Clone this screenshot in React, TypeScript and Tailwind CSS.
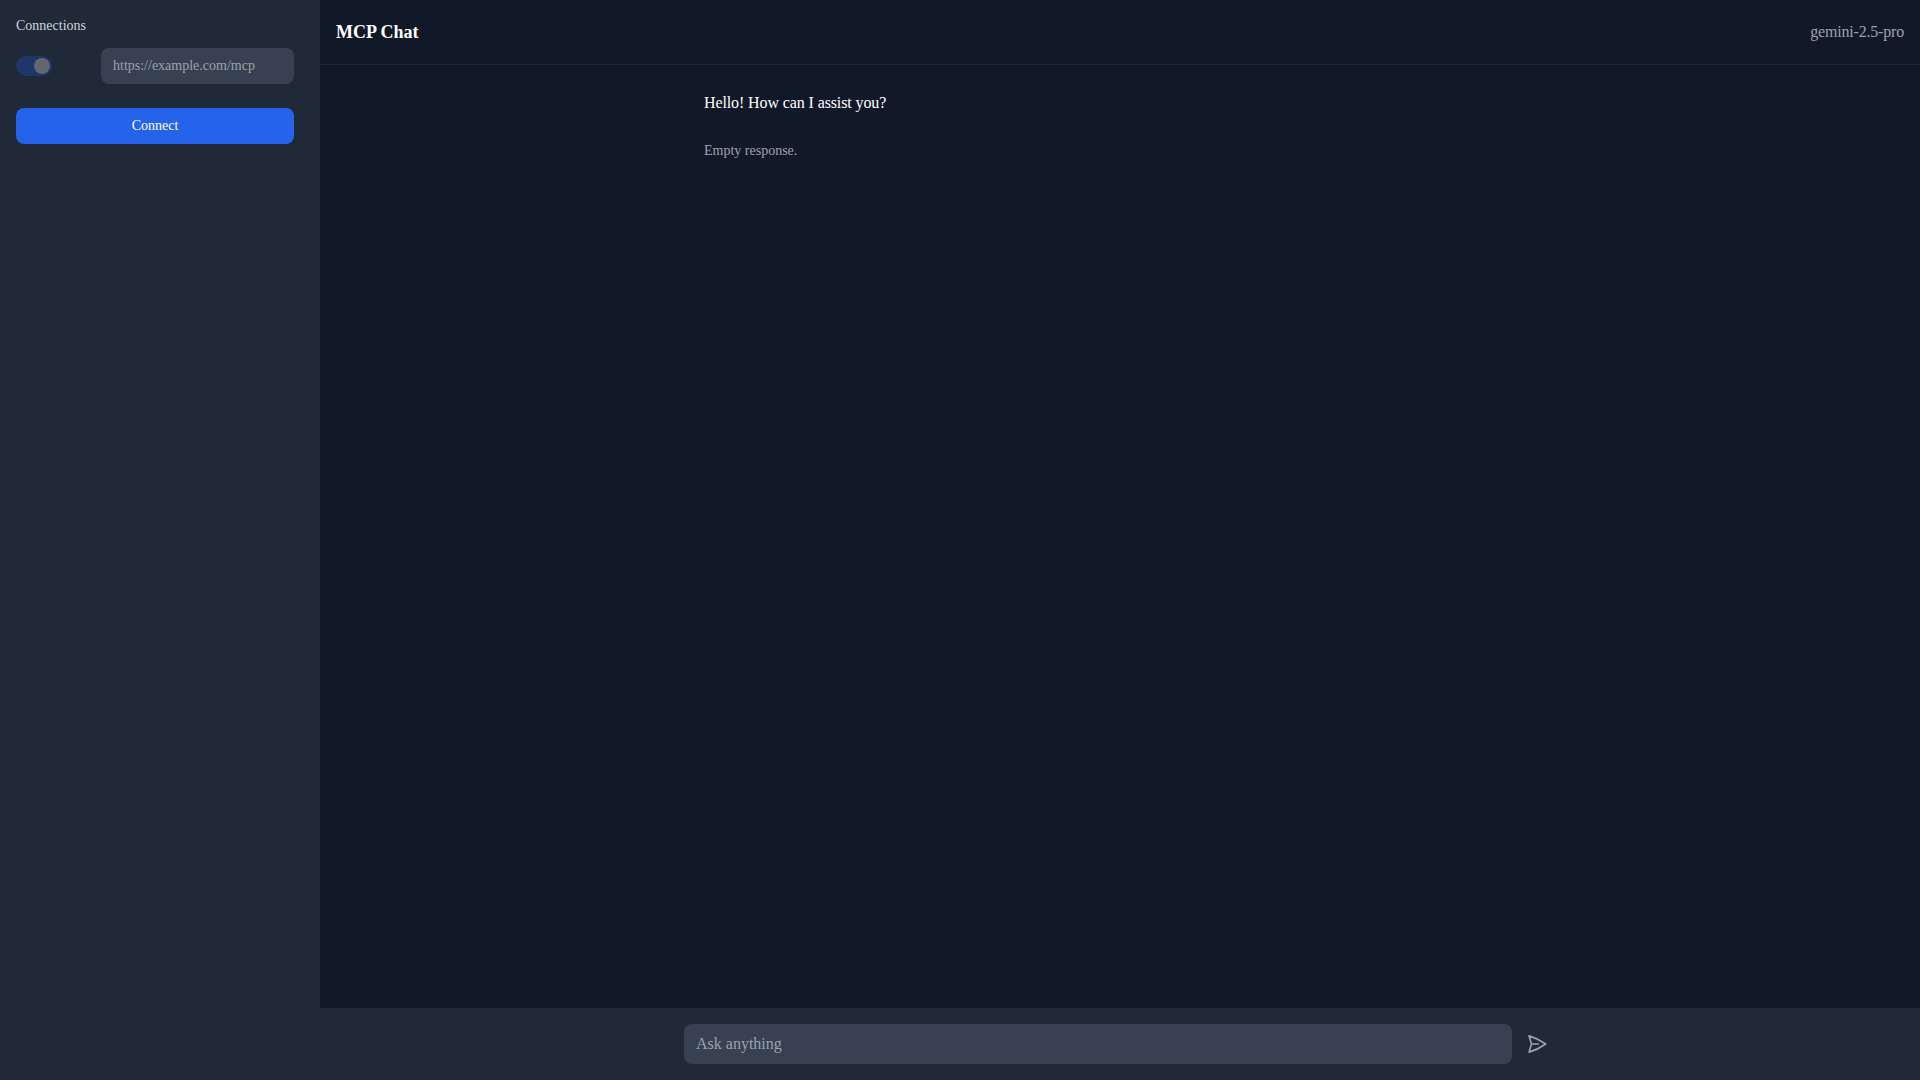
function Toggle() {
  return (
    <div className="w-9 h-5 rounded-full bg-[#1e3768] flex items-center justify-end pr-0.5 shrink-0">
      <div className="w-4 h-4 rounded-full bg-[#61666f]" />
    </div>
  );
}

function SendIcon() {
  return (
    <svg viewBox="0 0 24 24" fill="none" stroke="currentColor" strokeWidth={1.75} strokeLinecap="round" strokeLinejoin="round" className="w-[22px] h-[22px]">
      <path d="M6 12 3.269 3.125A59.769 59.769 0 0 1 21.485 12 59.768 59.768 0 0 1 3.27 20.875L5.999 12Zm0 0h7.5" />
    </svg>
  );
}

function Sidebar() {
  return (
    <aside className="w-80 shrink-0 bg-[#1f2937] pl-4 pr-[26px] pt-4 flex flex-col">
      <div className="text-sm leading-5 text-[#d1d5db] mb-3">Connections</div>
      <div className="flex items-center justify-between mb-6">
        <Toggle />
        <input
          readOnly
          placeholder="https://example.com/mcp"
          className="w-[193px] h-9 rounded-lg bg-[#374151] px-3 text-sm text-[#9ca3af] placeholder:text-[#9ca3af] outline-none"
        />
      </div>
      <button className="h-9 w-full rounded-lg bg-[#2563eb] text-sm text-white">Connect</button>
    </aside>
  );
}

function Header() {
  return (
    <header className="h-[65px] shrink-0 border-b border-[#1f2937] px-4 flex items-center justify-between">
      <h1 className="text-lg font-bold text-white">MCP Chat</h1>
      <span className="text-base tracking-[-0.19px] text-[#9ca3af]">gemini-2.5-pro</span>
    </header>
  );
}

function Messages() {
  return (
    <div className="flex-1 overflow-auto">
      <div className="max-w-4xl mx-auto px-8 pt-[26px]">
        <p className="text-base tracking-[-0.11px] leading-6 text-white mb-[26px]">Hello! How can I assist you?</p>
        <p className="text-sm leading-5 text-[#9ca3af]">Empty response.</p>
      </div>
    </div>
  );
}

function Composer() {
  return (
    <div className="h-[72px] shrink-0 bg-[#1f2937] flex items-center">
      <div className="w-full max-w-4xl mx-auto px-3 flex items-center gap-[14px]">
        <input
          readOnly
          placeholder="Ask anything"
          className="flex-1 h-10 rounded-lg bg-[#374151] px-3 text-base text-[#9ca3af] placeholder:text-[#9ca3af] outline-none"
        />
        <button className="text-[#9ca3af] w-[30px] flex items-center justify-start">
          <SendIcon />
        </button>
      </div>
    </div>
  );
}

export default function App() {
  return (
    <div className="h-screen flex bg-[#111827] font-['Liberation_Serif',serif]">
      <Sidebar />
      <main className="flex-1 flex flex-col min-w-0">
        <Header />
        <Messages />
        <Composer />
      </main>
    </div>
  );
}
